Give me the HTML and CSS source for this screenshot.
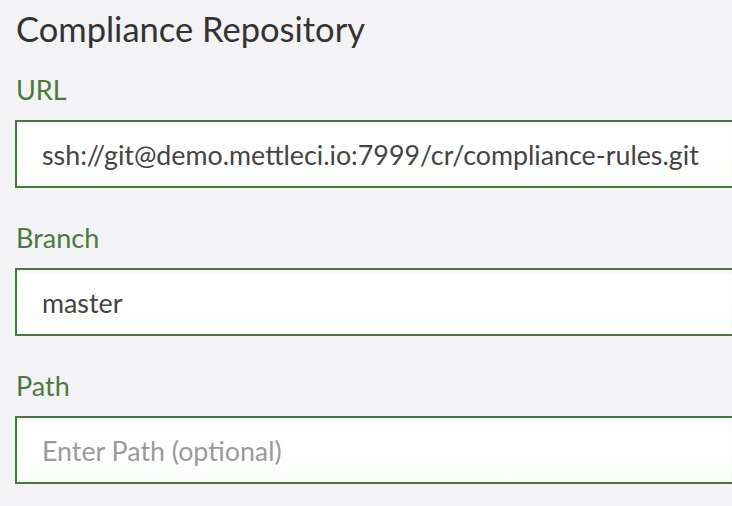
FILE: index.html
```html
<!DOCTYPE html>
<html lang="en">
<head>
<meta charset="utf-8">
<title>Compliance Repository</title>
<link rel="stylesheet" href="styles.css">
</head>
<body>
<main class="panel">
  <h1 class="title">Compliance Repository</h1>
  <div class="field">
    <label class="label" for="url">URL</label>
    <input class="input" id="url" type="text" value="ssh://git@demo.mettleci.io:7999/cr/compliance-rules.git">
  </div>
  <div class="field">
    <label class="label" for="branch">Branch</label>
    <input class="input" id="branch" type="text" value="master">
  </div>
  <div class="field">
    <label class="label" for="path">Path</label>
    <input class="input" id="path" type="text" placeholder="Enter Path (optional)">
  </div>
</main>
</body>
</html>
```

FILE: styles.css
```css
html, body {
  margin: 0;
  padding: 0;
  background: #f3f2f5;
  overflow: hidden;
}

body {
  font-family: "Lato", "Liberation Sans", sans-serif;
}

.panel {
  display: flex;
  flex-direction: column;
  gap: 35px;
  padding: 9px 0 0 15px;
}

.title {
  margin: 0 0 -9px 1px;
  font-size: 34.5px;
  line-height: 40px;
  font-weight: 400;
  color: #333333;
}

.field {
  display: flex;
  flex-direction: column;
  gap: 15px;
}

.label {
  margin-left: 1px;
  font-size: 27px;
  line-height: 30px;
  color: #4a7a3e;
}

.input {
  box-sizing: border-box;
  width: 100%;
  height: 68px;
  margin: 0;
  padding: 2px 0 0 25px;
  border: 2px solid #4a7440;
  border-right-width: 0;
  border-radius: 0;
  background: linear-gradient(#ffffff 40%, #fafdf9);
  box-shadow: inset 0 3px 3px rgba(0, 0, 0, 0.04);
  font-family: "Lato", "Liberation Sans", sans-serif;
  font-size: 26.8px;
  color: #444444;
  outline: none;
}

.input::placeholder {
  color: #9a9a9c;
}
```
